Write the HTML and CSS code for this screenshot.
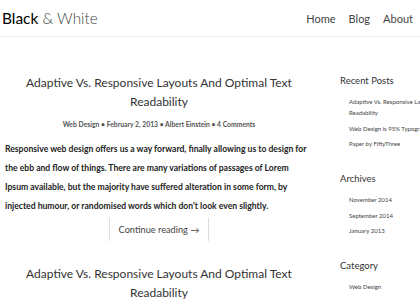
FILE: index.html
```html
<!DOCTYPE html>
<html lang="en">
<head>
    <meta charset="UTF-8">
    <title>Black &amp; White</title>
    <link rel="stylesheet" href="styles.css">
</head>
<body>
    <header class="topbar">
        <a class="logo" href="#"><b>Black</b> &amp; White</a>
        <nav class="menu">
            <a href="#">Home</a>
            <a href="#">Blog</a>
            <a href="#">About</a>
        </nav>
    </header>

    <div class="page">
        <main class="posts">
            <article class="post">
                <h2>Adaptive Vs. Responsive Layouts And Optimal Text Readability</h2>
                <p class="meta">
                    <span>Web Design</span> &bull; <span>February 2, 2013</span> &bull; <span>Albert Einstein</span> &bull; <span>4 Comments</span>
                </p>
                <p class="excerpt">Responsive web design offers us a way forward, finally allowing us to design for the ebb and flow of things. There are many variations of passages of Lorem Ipsum available, but the majority have suffered alteration in some form, by injected humour, or randomised words which don't look even slightly.</p>
                <div class="more"><a href="#">Continue reading &rarr;</a></div>
            </article>
            <article class="post">
                <h2>Adaptive Vs. Responsive Layouts And Optimal Text Readability</h2>
            </article>
        </main>

        <aside class="sidebar">
            <div class="widget">
                <h3>Recent Posts</h3>
                <ul>
                    <li>Adaptive Vs. Responsive Layouts And Optimal Text Readability</li>
                    <li>Web Design is 95% Typography</li>
                    <li>Paper by FiftyThree</li>
                </ul>
            </div>
            <div class="widget">
                <h3>Archives</h3>
                <ul>
                    <li>November 2014</li>
                    <li>September 2014</li>
                    <li>January 2013</li>
                </ul>
            </div>
            <div class="widget">
                <h3>Category</h3>
                <ul>
                    <li>Web Design</li>
                </ul>
            </div>
        </aside>
    </div>
</body>
</html>
```

FILE: styles.css
```css
html, body
{
    overflow: hidden;
}
body
{
    margin: 0;
    width: 420px;
    height: 300px;
    background: #fff;
    font-family: Lato, "Open Sans", sans-serif;
    color: #333;
}
a
{
    color: inherit;
    text-decoration: none;
}
.topbar
{
    display: flex;
    justify-content: space-between;
    align-items: center;
    height: 36px;
    padding: 0 7px 0 2px;
    border-bottom: 1px solid #eee;
}
.logo
{
    font-size: 15.4px;
    font-weight: 300;
    color: #444;
}
.logo b
{
    font-weight: 400;
    color: #000;
}
.menu
{
    display: flex;
    gap: 13px;
}
.menu a
{
    font-size: 11px;
    color: #444;
}
.page
{
    display: flex;
    width: 620px;
}
.posts
{
    width: 318px;
    padding-top: 36px;
    flex-shrink: 0;
}
.post + .post
{
    padding-top: 23px;
}
.post h2
{
    margin: 0;
    text-align: center;
    font-size: 12px;
    font-weight: 400;
    line-height: 19px;
    color: #333;
}
.meta
{
    margin: 8px 0 0;
    text-align: center;
    font-size: 6.8px;
    font-weight: 700;
    line-height: 10px;
    color: #555;
}
.excerpt
{
    margin: 11px 5px 0;
    font-size: 8.6px;
    font-weight: 700;
    line-height: 19px;
    color: #222;
}
.more
{
    display: flex;
    justify-content: center;
    margin-top: 2px;
}
.more a
{
    padding: 4px 9px;
    border-left: 1px solid #ddd;
    border-right: 1px solid #ddd;
    font-size: 9.2px;
    line-height: 15px;
    color: #444;
}
.sidebar
{
    width: 160px;
    padding: 38px 0 0 22px;
    flex-shrink: 0;
}
.widget
{
    margin-bottom: 24px;
}
.widget h3
{
    margin: 0 0 10px;
    font-size: 9.5px;
    font-weight: 400;
    color: #333;
}
.widget ul
{
    list-style: none;
    width: 140px;
    margin: 0;
    padding: 0 0 0 9px;
}
.widget li
{
    margin-bottom: 4.5px;
    font-size: 6px;
    line-height: 11px;
    color: #444;
}
```
